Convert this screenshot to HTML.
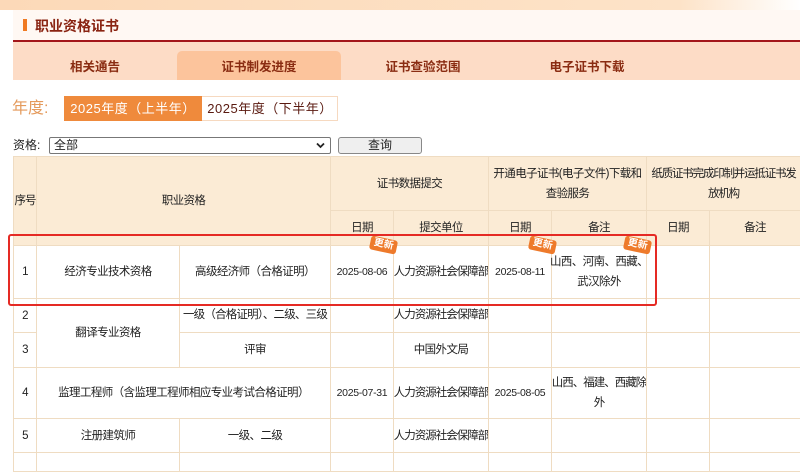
<!DOCTYPE html>
<html><head><meta charset="utf-8"><style>
*{margin:0;padding:0;box-sizing:border-box}
body{width:800px;height:459px;overflow:hidden;background:#fff;font-family:"Liberation Sans","Noto Sans CJK SC","WenQuanYi Zen Hei",sans-serif;font-size:12px;color:#222;position:relative}
.a{position:absolute}
.c{position:absolute;border:1px solid #efdcc2;display:flex;align-items:center;justify-content:center;text-align:center;line-height:20px;font-size:11.5px;color:#222;white-space:nowrap;letter-spacing:-0.6px;overflow:visible}
.h{background:#fbebd5}
.d{font-size:10.5px;letter-spacing:-0.3px}
.tab{position:absolute;top:51px;height:29px;display:flex;align-items:center;justify-content:center;font-weight:bold;color:#8a2c12;font-size:12.5px}
.badge{position:absolute;width:27px;height:14px;background:#ee7a2b;color:#fff;font-size:10px;font-weight:bold;line-height:14px;text-align:center;border-radius:3px;transform:rotate(12deg);white-space:nowrap}
</style></head><body>
<div class="a" style="left:0;top:0;width:800px;height:10px;background:linear-gradient(90deg,#fcd9b8,#fde3c8 85%,#fff)"></div>
<div class="a" style="left:13px;top:10px;width:787px;height:30px;background:#fff8f3"></div>
<div class="a" style="left:23px;top:19px;width:4px;height:12px;background:#f07a22"></div>
<div class="a" style="left:35px;top:16px;font-size:14px;font-weight:bold;color:#8a2412">职业资格证书</div>
<div class="a" style="left:13px;top:40px;width:787px;height:2px;background:#a3161b"></div>
<div class="a" style="left:13px;top:42px;width:787px;height:38px;background:#fddcc6"></div>
<div class="a" style="left:177px;top:51px;width:164px;height:29px;background:#fcc49c;border-radius:5px 5px 0 0"></div>
<div class="tab" style="left:13px;width:164px">相关通告</div>
<div class="tab" style="left:177px;width:164px">证书制发进度</div>
<div class="tab" style="left:341px;width:164px">证书查验范围</div>
<div class="tab" style="left:505px;width:164px">电子证书下载</div>
<div class="a" style="left:12px;top:98px;font-size:16px;color:#e49a5c;line-height:22px">年度:</div>
<div class="a" style="left:64px;top:96px;width:274px;height:25px;border:1px solid #f6d9c0"></div>
<div class="a" style="left:64px;top:96px;width:138px;height:25px;background:#ef8a3c;color:#fff;font-size:13px;line-height:25px;text-align:center;letter-spacing:0.5px;white-space:nowrap">2025年度（上半年）</div>
<div class="a" style="left:202px;top:96px;width:136px;height:25px;color:#5a1a10;font-size:13px;line-height:25px;text-align:center;letter-spacing:0.5px;white-space:nowrap">2025年度（下半年）</div>
<div class="a" style="left:13px;top:137px;font-size:12px;line-height:17px">资格:</div>
<div class="a" style="left:49px;top:137px;width:282px;height:17px;border:1px solid #777;border-radius:2px;font-size:12px;line-height:15px;padding-left:4px">全部<svg style="position:absolute;right:5px;top:4px" width="9" height="7" viewBox="0 0 9 7"><path d="M1 1.5L4.5 5L8 1.5" stroke="#222" stroke-width="1.8" fill="none"/></svg></div>
<div class="a" style="left:338px;top:137px;width:84px;height:17px;border:1px solid #888;border-radius:3px;background:#efefef;text-align:center;line-height:15px">查询</div>

<div class="c h" style="left:13px;top:156px;width:24px;height:90px;letter-spacing:-1px">序号</div>
<div class="c h" style="left:36px;top:156px;width:295px;height:90px">职业资格</div>
<div class="c h" style="left:330px;top:156px;width:159px;height:55px">证书数据提交</div>
<div class="c h" style="left:488px;top:156px;width:159px;height:55px">开通电子证书(电子文件)下载和<br>查验服务</div>
<div class="c h" style="left:646px;top:156px;width:155px;height:55px;letter-spacing:-1.2px">纸质证书完成印制并运抵证书发<br>放机构</div>
<div class="c h" style="left:330px;top:210px;width:64px;height:36px">日期</div>
<div class="c h" style="left:393px;top:210px;width:96px;height:36px">提交单位</div>
<div class="c h" style="left:488px;top:210px;width:64px;height:36px">日期</div>
<div class="c h" style="left:551px;top:210px;width:96px;height:36px">备注</div>
<div class="c h" style="left:646px;top:210px;width:64px;height:36px">日期</div>
<div class="c h" style="left:709px;top:210px;width:92px;height:36px">备注</div>

<div class="c" style="left:13px;top:245px;width:24px;height:54px">1</div>
<div class="c" style="left:36px;top:245px;width:144px;height:54px">经济专业技术资格</div>
<div class="c" style="left:179px;top:245px;width:152px;height:54px">高级经济师（合格证明）</div>
<div class="c d" style="left:330px;top:245px;width:64px;height:54px">2025-08-06</div>
<div class="c" style="left:393px;top:245px;width:96px;height:54px;letter-spacing:-1px">人力资源社会保障部</div>
<div class="c d" style="left:488px;top:245px;width:64px;height:54px">2025-08-11</div>
<div class="c" style="left:551px;top:245px;width:96px;height:54px">山西、河南、西藏、<br>武汉除外</div>
<div class="c" style="left:646px;top:245px;width:64px;height:54px"></div>
<div class="c" style="left:709px;top:245px;width:92px;height:54px"></div>

<div class="c" style="left:13px;top:298px;width:24px;height:35px">2</div>
<div class="c" style="left:13px;top:332px;width:24px;height:36px">3</div>
<div class="c" style="left:36px;top:298px;width:144px;height:70px">翻译专业资格</div>
<div class="c" style="left:179px;top:298px;width:152px;height:35px;align-items:flex-start;padding-top:6px;letter-spacing:-0.8px">一级（合格证明）、二级、三级</div>
<div class="c" style="left:179px;top:332px;width:152px;height:36px">评审</div>
<div class="c" style="left:330px;top:298px;width:64px;height:35px"></div>
<div class="c" style="left:393px;top:298px;width:96px;height:35px;align-items:flex-start;padding-top:6px;letter-spacing:-1px">人力资源社会保障部</div>
<div class="c" style="left:488px;top:298px;width:64px;height:35px"></div>
<div class="c" style="left:551px;top:298px;width:96px;height:35px"></div>
<div class="c" style="left:646px;top:298px;width:64px;height:35px"></div>
<div class="c" style="left:709px;top:298px;width:92px;height:35px"></div>
<div class="c" style="left:330px;top:332px;width:64px;height:36px"></div>
<div class="c" style="left:393px;top:332px;width:96px;height:36px">中国外文局</div>
<div class="c" style="left:488px;top:332px;width:64px;height:36px"></div>
<div class="c" style="left:551px;top:332px;width:96px;height:36px"></div>
<div class="c" style="left:646px;top:332px;width:64px;height:36px"></div>
<div class="c" style="left:709px;top:332px;width:92px;height:36px"></div>

<div class="c" style="left:13px;top:367px;width:24px;height:52px">4</div>
<div class="c" style="left:36px;top:367px;width:295px;height:52px">监理工程师（含监理工程师相应专业考试合格证明）</div>
<div class="c d" style="left:330px;top:367px;width:64px;height:52px">2025-07-31</div>
<div class="c" style="left:393px;top:367px;width:96px;height:52px;letter-spacing:-1px">人力资源社会保障部</div>
<div class="c d" style="left:488px;top:367px;width:64px;height:52px">2025-08-05</div>
<div class="c" style="left:551px;top:367px;width:96px;height:52px;letter-spacing:-1px">山西、福建、西藏除<br>外</div>
<div class="c" style="left:646px;top:367px;width:64px;height:52px"></div>
<div class="c" style="left:709px;top:367px;width:92px;height:52px"></div>

<div class="c" style="left:13px;top:418px;width:24px;height:35px">5</div>
<div class="c" style="left:36px;top:418px;width:144px;height:35px">注册建筑师</div>
<div class="c" style="left:179px;top:418px;width:152px;height:35px">一级、二级</div>
<div class="c" style="left:330px;top:418px;width:64px;height:35px"></div>
<div class="c" style="left:393px;top:418px;width:96px;height:35px;letter-spacing:-1px">人力资源社会保障部</div>
<div class="c" style="left:488px;top:418px;width:64px;height:35px"></div>
<div class="c" style="left:551px;top:418px;width:96px;height:35px"></div>
<div class="c" style="left:646px;top:418px;width:64px;height:35px"></div>
<div class="c" style="left:709px;top:418px;width:92px;height:35px"></div>
<div class="c" style="left:13px;top:452px;width:24px;height:20px"></div>
<div class="c" style="left:36px;top:452px;width:144px;height:20px"></div>
<div class="c" style="left:179px;top:452px;width:152px;height:20px"></div>
<div class="c" style="left:330px;top:452px;width:64px;height:20px"></div>
<div class="c" style="left:393px;top:452px;width:96px;height:20px"></div>
<div class="c" style="left:488px;top:452px;width:64px;height:20px"></div>
<div class="c" style="left:551px;top:452px;width:96px;height:20px"></div>
<div class="c" style="left:646px;top:452px;width:64px;height:20px"></div>
<div class="c" style="left:709px;top:452px;width:92px;height:20px"></div>

<div class="a" style="left:8px;top:234px;width:649px;height:72px;border:2px solid #e52a24;border-radius:3px"></div>
<div class="badge" style="left:370px;top:238px">更新</div>
<div class="badge" style="left:529px;top:238px">更新</div>
<div class="badge" style="left:624px;top:238px">更新</div>
</body></html>
